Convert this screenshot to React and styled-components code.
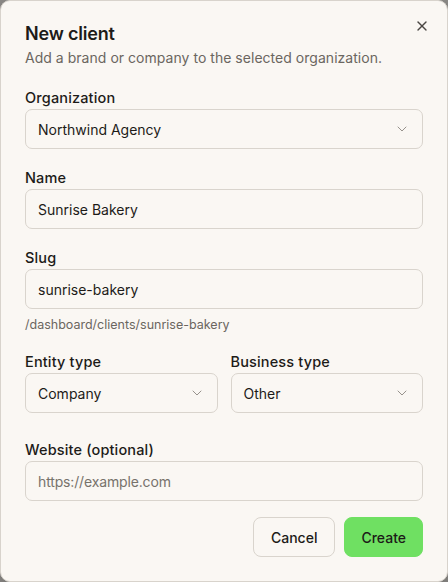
import React from 'react'
import styled, { createGlobalStyle } from 'styled-components'
import { ChevronDown, X } from 'lucide-react'

const GlobalStyle = createGlobalStyle`
  html, body {
    margin: 0;
    padding: 0;
    background: #8e8c89;
  }
  * { box-sizing: border-box; }
  body {
    font-family: Inter, "Noto Sans", "Liberation Sans", sans-serif;
    color: #1d1b18;
  }
`

const Dialog = styled.div`
  position: relative;
  width: 448px;
  height: 582px;
  background: #faf7f3;
  border: 1px solid #d8d3cc;
  border-radius: 10px;
  box-shadow: 0 8px 24px rgba(0, 0, 0, 0.25);
  padding: 21px 24px 24px;
  display: flex;
  flex-direction: column;
`

const CloseButton = styled.button`
  position: absolute;
  top: 16px;
  right: 16px;
  width: 18px;
  height: 18px;
  padding: 0;
  border: none;
  background: none;
  color: #4a4743;
  display: flex;
  align-items: center;
  justify-content: center;
`

const Header = styled.div`
  display: flex;
  flex-direction: column;
  gap: 2px;
  margin-bottom: 20px;
`

const Title = styled.h2`
  margin: 0;
  font-size: 18px;
  line-height: 24px;
  font-weight: 600;
  letter-spacing: -0.2px;
`

const Description = styled.p`
  margin: 0;
  font-size: 14px;
  line-height: 20px;
  letter-spacing: 0.03px;
  color: #6b665f;
`

const Form = styled.div`
  display: flex;
  flex-direction: column;
  gap: 19px;
`

const Field = styled.div`
  display: flex;
  flex-direction: column;
  min-width: 0;
`

const Label = styled.label`
  font-size: 14.5px;
  line-height: 20px;
  font-weight: 500;
  letter-spacing: 0.15px;
  margin-bottom: 1px;
`

const Box = styled.div`
  height: 40px;
  border: 1px solid #d9d4cd;
  border-radius: 7px;
  background: #faf7f3;
  display: flex;
  align-items: center;
  justify-content: space-between;
  padding: 0 12px;
  font-size: 14px;
  color: ${p => (p.$placeholder ? '#77726b' : '#1d1b18')};
  letter-spacing: ${p => (p.$placeholder ? '-0.15px' : '0')};
`

const Hint = styled.div`
  margin-top: 8px;
  font-size: 12.5px;
  line-height: 16px;
  color: #6b665f;
`

const Row = styled.div`
  display: grid;
  grid-template-columns: 1fr 1fr;
  gap: 13px;
  margin-bottom: 8px;
`

const Footer = styled.div`
  display: flex;
  justify-content: flex-end;
  gap: 9px;
  margin-top: 16px;
`

const Button = styled.button`
  height: 40px;
  padding: 0 ${p => (p.$primary ? '16px' : '17px')};
  border-radius: 8px;
  font-family: inherit;
  font-size: 14px;
  font-weight: 500;
  color: #1d1b18;
  border: 1px solid ${p => (p.$primary ? '#6fe062' : '#d9d4cd')};
  background: ${p => (p.$primary ? '#6fe062' : '#faf7f3')};
`

const Select = ({ value }) => (
  <Box>
    {value}
    <ChevronDown size={16} strokeWidth={1.4} color="#8f8a83" />
  </Box>
)

export default function App() {
  return (
    <>
      <GlobalStyle />
      <Dialog>
        <CloseButton aria-label="Close">
          <X size={16} strokeWidth={2} />
        </CloseButton>
        <Header>
          <Title>New client</Title>
          <Description>Add a brand or company to the selected organization.</Description>
        </Header>
        <Form>
          <Field>
            <Label>Organization</Label>
            <Select value="Northwind Agency" />
          </Field>
          <Field>
            <Label>Name</Label>
            <Box>Sunrise Bakery</Box>
          </Field>
          <Field>
            <Label>Slug</Label>
            <Box>sunrise-bakery</Box>
            <Hint>/dashboard/clients/sunrise-bakery</Hint>
          </Field>
          <Row>
            <Field>
              <Label>Entity type</Label>
              <Select value="Company" />
            </Field>
            <Field>
              <Label>Business type</Label>
              <Select value="Other" />
            </Field>
          </Row>
          <Field>
            <Label>Website (optional)</Label>
            <Box $placeholder>https://example.com</Box>
          </Field>
        </Form>
        <Footer>
          <Button>Cancel</Button>
          <Button $primary>Create</Button>
        </Footer>
      </Dialog>
    </>
  )
}
